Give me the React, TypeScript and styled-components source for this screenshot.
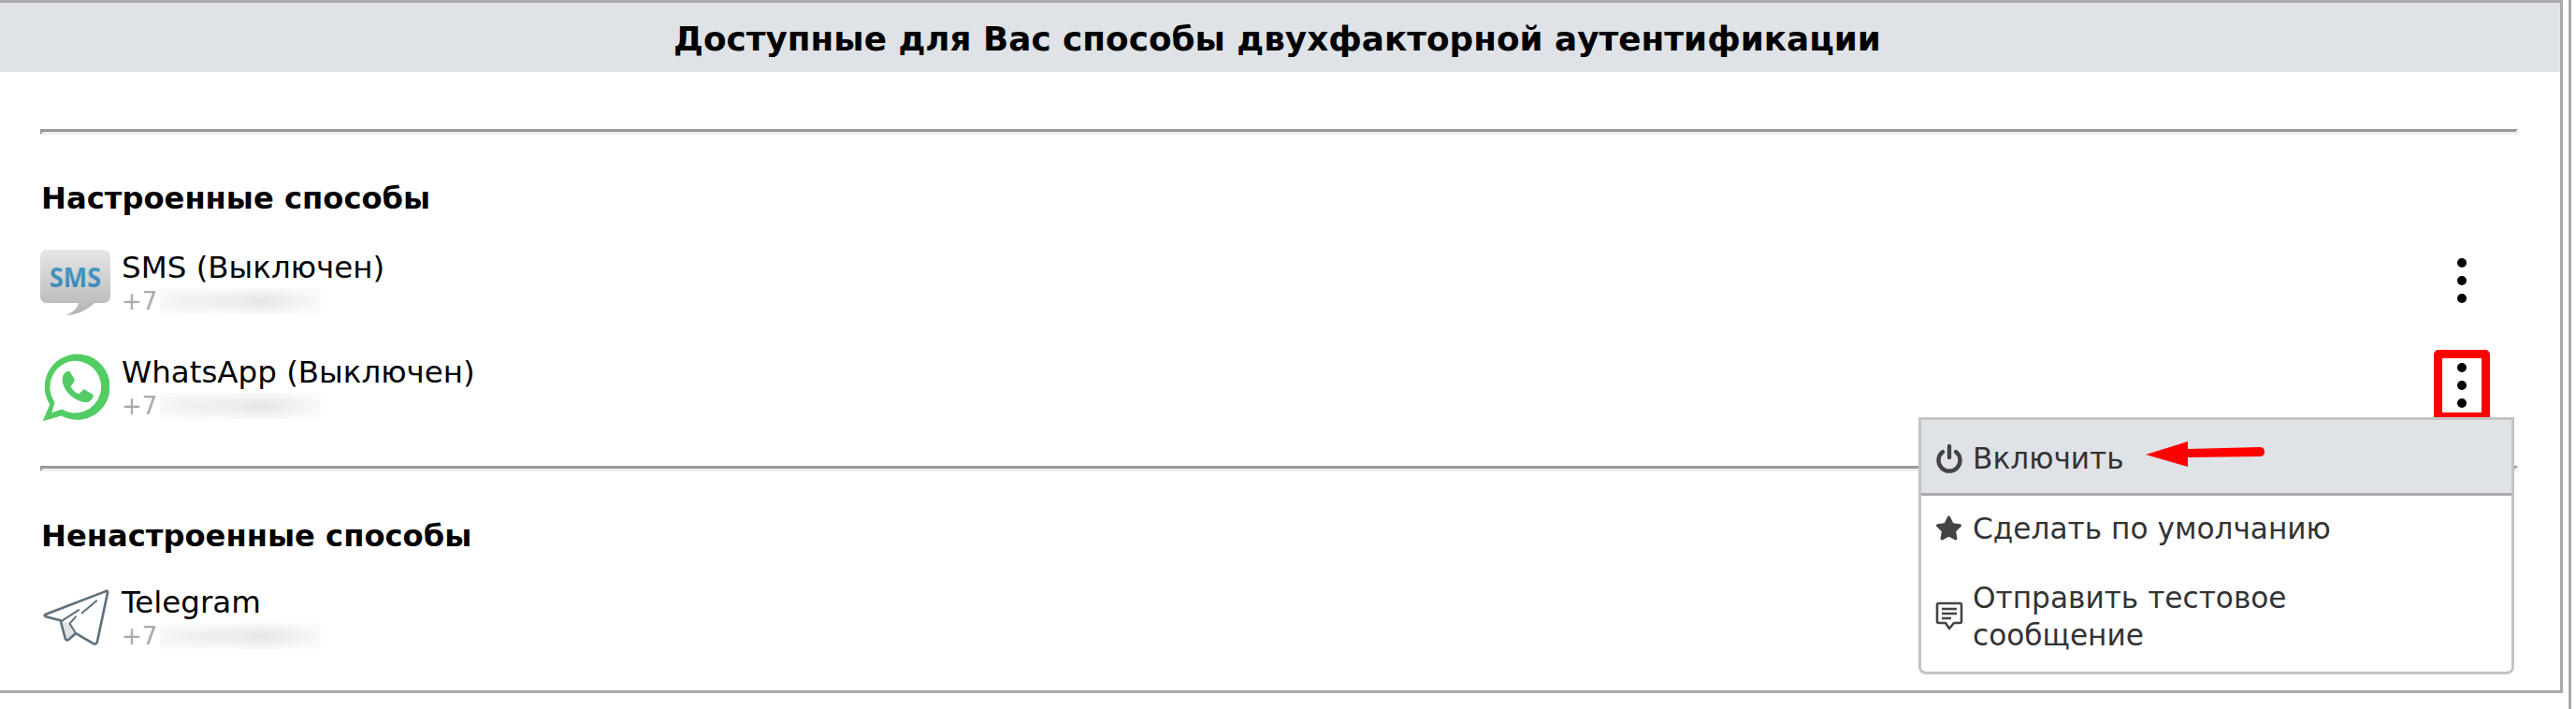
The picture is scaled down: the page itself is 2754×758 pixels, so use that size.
import React from "react";
import styled, { createGlobalStyle } from "styled-components";
import { FaStar } from "react-icons/fa";

const Global = createGlobalStyle`
  html, body { margin: 0; padding: 0; background: #fff; }
  body { font-family: "DejaVu Sans", Verdana, sans-serif; color: #000; }
`;

const Frame = styled.div`
  box-sizing: border-box;
  width: 2749px;
  height: 758px;
  border-right: 3px solid #aaa;
`;

const Panel = styled.section`
  position: relative;
  box-sizing: border-box;
  width: 2740px;
  height: 741px;
  border-top: 3px solid #aaa;
  border-right: 3px solid #aaa;
  border-bottom: 3px solid #aaa;
`;

const Header = styled.h1`
  box-sizing: border-box;
  margin: 0;
  height: 74px;
  background: #dfe2e6;
  display: flex;
  align-items: center;
  justify-content: center;
  font-size: 35.8px;
  font-weight: 700;
  padding: 2px 6px 0 0;
  white-space: nowrap;
`;

const Body = styled.div`
  padding: 61px 45px 0 43px;
`;

const Rule = styled.hr<{ $top?: number }>`
  margin: ${(p) => p.$top ?? 0}px 0 0;
  height: 0;
  border-style: solid;
  border-width: 3px;
  border-color: #999 #eee #eee #999;
`;

const SectionTitle = styled.h2<{ $gap: number }>`
  margin: ${(p) => p.$gap}px 0 0 1px;
  font-size: 32.2px;
  line-height: 36px;
  font-weight: 700;
`;

const Row = styled.div<{ $top: number }>`
  margin-top: ${(p) => p.$top}px;
  height: 72px;
  display: flex;
  align-items: center;
  justify-content: space-between;
`;

const Method = styled.div`
  display: flex;
  align-items: flex-start;
`;

const IconCell = styled.div`
  width: 75px;
  height: 72px;
  margin-right: 12px;
  display: flex;
  align-items: center;
  justify-content: center;
  flex: none;
`;

const Info = styled.div`
  padding-top: 2px;
`;

const Name = styled.div`
  font-size: 32.5px;
  line-height: 36px;
  white-space: nowrap;
`;

const Phone = styled.div`
  display: flex;
  align-items: center;
  font-size: 26px;
  line-height: 28px;
  color: #aaa;
  margin-top: 4px;
`;

const Blurred = styled.span`
  display: block;
  width: 172px;
  height: 28px;
  margin-left: 3px;
  background:
    radial-gradient(ellipse 40% 55% at 62% 50%, #e6e6e6, transparent),
    radial-gradient(ellipse 32% 50% at 22% 50%, #eeeeee, transparent),
    #fafafa;
`;

const Kebab = styled.button<{ $marked?: boolean }>`
  box-sizing: border-box;
  width: 60px;
  height: 76px;
  margin: 0 30px 4px 0;
  padding: 0;
  display: flex;
  flex-direction: column;
  align-items: center;
  justify-content: center;
  gap: 9px;
  background: #fff;
  border: 9px solid ${(p) => (p.$marked ? "#f00" : "transparent")};
  border-radius: 5px;
`;

const Dot = styled.i`
  display: block;
  width: 10px;
  height: 10px;
  border-radius: 50%;
  background: #000;
`;

const Menu = styled.div`
  position: absolute;
  left: 2051px;
  top: 443px;
  box-sizing: border-box;
  width: 637px;
  height: 275px;
  background: #fff;
  border: 3px solid #c4c4c4;
  border-radius: 0 0 8px 8px;
  color: #333;
  font-size: 31.2px;
  line-height: 40px;
`;

const MenuItem = styled.div<{ $active?: boolean; $height: number; $pad?: number }>`
  position: relative;
  box-sizing: border-box;
  height: ${(p) => p.$height}px;
  display: flex;
  align-items: center;
  padding: ${(p) => p.$pad ?? 0}px 0 0 15px;
  background: ${(p) => (p.$active ? "#dfe2e6" : "transparent")};
  border-bottom: ${(p) => (p.$active ? "3px solid #aaa" : "none")};
`;

const MenuIcon = styled.span`
  width: 40px;
  flex: none;
  display: flex;
  align-items: center;
  color: #444;
  filter: blur(0.5px);
`;

const Arrow = styled.svg`
  position: absolute;
  left: 240px;
  top: 22px;
`;

const SmsIcon = () => (
  <svg width="75" height="70" viewBox="0 0 75 70">
    <defs>
      <linearGradient id="smsg" x1="0" y1="0" x2="0" y2="1">
        <stop offset="0" stopColor="#e6e6e6" />
        <stop offset="1" stopColor="#b4b4b4" />
      </linearGradient>
      <linearGradient id="smst" x1="0" y1="0" x2="0" y2="1">
        <stop offset="0" stopColor="#4a9bc8" />
        <stop offset="1" stopColor="#3a86b4" />
      </linearGradient>
    </defs>
    <path
      d="M7 0H68a7 7 0 0 1 7 7V50a7 7 0 0 1-7 7H58C52 63 40 70 28 70 36 66 40 62 41 57H7a7 7 0 0 1-7-7V7a7 7 0 0 1 7-7Z"
      fill="url(#smsg)"
    />
    <text
      x="10"
      y="40"
      fontFamily="'Open Sans', sans-serif"
      fontWeight="700"
      fontSize="29"
      textLength="55"
      lengthAdjust="spacingAndGlyphs"
      fill="url(#smst)"
    >
      SMS
    </text>
  </svg>
);

const WhatsAppIcon = () => (
  <svg width="73" height="75" viewBox="40 355 220 225">
    <path
      fillRule="evenodd"
      fill="#52cc63"
      d="M152 359A106 106 0 1 1 105 558L45 575 68 522A106 106 0 0 1 152 359ZM152 381A84 84 0 0 0 84 514L74 548 106 537A84 84 0 1 0 152 381Z"
    />
    <path
      fill="#52cc63"
      d="M110 430Q116 414 132 414L148 442Q146 452 135 464 150 488 163 487L177 472 208 490C208 506 196 516 178 514 145 510 100 470 110 430Z"
    />
  </svg>
);

const PlaneIcon = () => (
  <svg width="72" height="64" viewBox="40 52 220 192" fill="none">
    <path d="M104 158 130 170 150 204 122 222Z" fill="#dfe4e7" />
    <path
      d="M250 62 52 138Q44 142 52 146L100 158 116 218Q120 226 128 220L150 200 208 234Q216 238 220 228L254 68Q254 58 250 62Z"
      stroke="#5d6f7a"
      strokeWidth="8"
      strokeLinejoin="round"
    />
    <path d="M218 94 170 134M150 146 130 168 150 200M104 160 160 124" stroke="#5d6f7a" strokeWidth="6" strokeLinecap="round" strokeLinejoin="round" />
  </svg>
);

const PowerIcon = () => (
  <svg width="30" height="32" viewBox="0 0 30 32" fill="none" stroke="#444" strokeWidth="4.4" strokeLinecap="round">
    <path d="M15 3V15" />
    <path d="M8 9a11.5 11.5 0 1 0 14 0" />
  </svg>
);

const NoteIcon = () => (
  <svg width="30" height="32" viewBox="0 0 30 32" fill="none" stroke="#444" strokeWidth="2.6" strokeLinejoin="round">
    <path d="M4 2H26a2 2 0 0 1 2 2V21a2 2 0 0 1-2 2H20L15 29 11 23H4a2 2 0 0 1-2-2V4a2 2 0 0 1 2-2Z" />
    <path d="M7 8H23M7 13H23M7 18H17" />
  </svg>
);

type MethodData = { name: string; icon: React.ReactNode };

const MethodRow = ({ name, icon, top, marked, menu }: MethodData & { top: number; marked?: boolean; menu?: boolean }) => (
  <Row $top={top}>
    <Method>
      <IconCell>{icon}</IconCell>
      <Info>
        <Name>{name}</Name>
        <Phone>
          +7<Blurred />
        </Phone>
      </Info>
    </Method>
    {menu && (
      <Kebab $marked={marked}>
        <Dot />
        <Dot />
        <Dot />
      </Kebab>
    )}
  </Row>
);

export default function App() {
  return (
    <>
      <Global />
      <Frame>
        <Panel>
          <Header>Доступные для Вас способы двухфакторной аутентификации</Header>
          <Body>
            <Rule />
            <SectionTitle $gap={50}>Настроенные способы</SectionTitle>
            <MethodRow top={36} menu name="SMS (Выключен)" icon={<SmsIcon />} />
            <MethodRow top={40} menu marked name="WhatsApp (Выключен)" icon={<WhatsAppIcon />} />
            <Rule $top={48} />
            <SectionTitle $gap={51}>Ненастроенные способы</SectionTitle>
            <MethodRow top={33} name="Telegram" icon={<PlaneIcon />} />
          </Body>
          <Menu>
            <MenuItem $active $height={81} $pad={4}>
              <MenuIcon>
                <PowerIcon />
              </MenuIcon>
              Включить
              <Arrow width="128" height="30" viewBox="0 0 128 30">
                <path d="M0 15 45 1V9L122 7Q127 7 127 12T122 17L45 18V28Z" fill="#f00" />
              </Arrow>
            </MenuItem>
            <MenuItem $height={69}>
              <MenuIcon>
                <FaStar size={29} />
              </MenuIcon>
              Сделать по умолчанию
            </MenuItem>
            <MenuItem $height={119}>
              <MenuIcon>
                <NoteIcon />
              </MenuIcon>
              <span>
                Отправить тестовое
                <br />
                сообщение
              </span>
            </MenuItem>
          </Menu>
        </Panel>
      </Frame>
    </>
  );
}
